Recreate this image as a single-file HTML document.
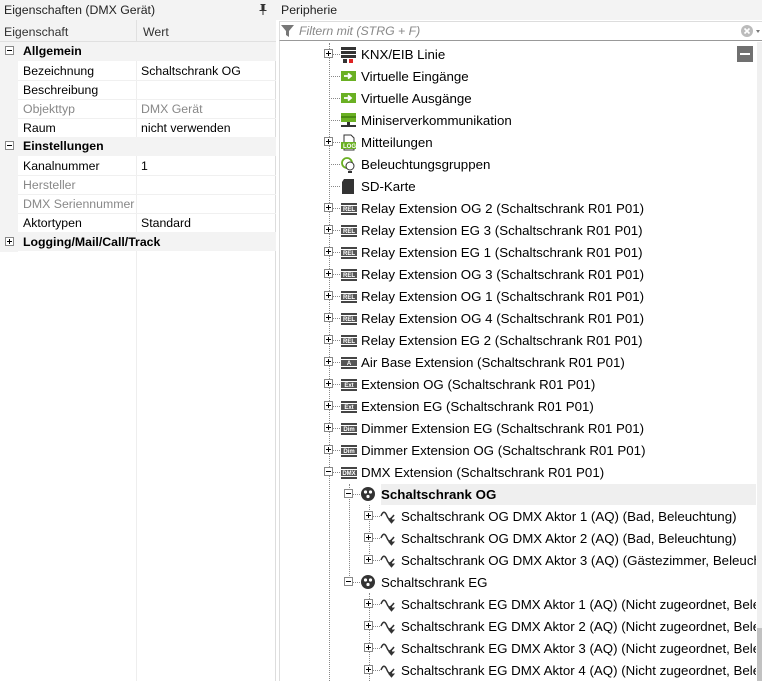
<!DOCTYPE html>
<html><head><meta charset="utf-8"><style>
*{margin:0;padding:0;box-sizing:border-box}
body{width:762px;height:681px;overflow:hidden;background:#fff;font-family:"Liberation Sans",sans-serif;position:relative;color:#000}
.a{position:absolute;white-space:nowrap}
.lp{font-size:12.3px}
.t{font-size:13.3px;line-height:22px;height:22px}
.bx{position:absolute;width:9px;height:9px;border:1px solid #888;background:#fff}
.bx:before{content:"";position:absolute;left:1px;top:3px;width:5px;height:1px;background:#000}
.bx.p:after{content:"";position:absolute;left:3px;top:1px;width:1px;height:5px;background:#000}
.hd{position:absolute;border-top:1px dotted #888;height:0}
.vd{position:absolute;border-left:1px dotted #888;width:0}
.ic{position:absolute}
#clip{position:absolute;left:0;top:0;width:756px;height:681px;overflow:hidden}
</style></head><body>
<!-- left panel -->
<div class="a" style="left:0;top:0;width:276px;height:681px;background:#fff;border-right:1px solid #ddd"></div>
<div class="a" style="left:0;top:0;width:276px;height:20px;background:#f3f3f3"></div>
<div class="a lp" style="left:4px;top:3px;color:#222">Eigenschaften (DMX Gerät)</div>
<svg class="ic" style="left:259px;top:4px" width="8" height="11"><path d="M1.5 0h5v1h-1v5h2v1h-3v4h-1V7h-3V6h2V1h-1z" fill="#333"/></svg>
<div class="a" style="left:0;top:20px;width:276px;height:22px;background:#f3f3f3;border-bottom:1px solid #e0e0e0"></div>
<div class="a" style="left:136px;top:20px;width:1px;height:22px;background:#e0e0e0"></div>
<div class="a lp" style="left:4px;top:25px;color:#333">Eigenschaft</div>
<div class="a lp" style="left:143px;top:25px;color:#333">Wert</div>
<div class="a" style="left:0;top:42px;width:18px;height:210px;background:#f3f3f3"></div>
<div class="a" style="left:136px;top:42px;width:1px;height:639px;background:#eee"></div>
<div class="a" style="left:0;top:42px;width:276px;height:19px;background:#f3f3f3"></div>
<div class="a" style="left:0;top:137px;width:276px;height:19px;background:#f3f3f3"></div>
<div class="a" style="left:0;top:232px;width:276px;height:19px;background:#f3f3f3"></div>
<div class="bx" style="left:5px;top:46px"></div>
<div class="bx" style="left:5px;top:141px"></div>
<div class="bx p" style="left:5px;top:237px"></div>
<div class="a lp" style="left:23px;top:44px;font-weight:bold">Allgemein</div>
<div class="a lp" style="left:23px;top:64px">Bezeichnung</div><div class="a lp" style="left:141px;top:64px">Schaltschrank OG</div>
<div class="a lp" style="left:23px;top:83px">Beschreibung</div>
<div class="a lp" style="left:23px;top:102px;color:#888">Objekttyp</div><div class="a lp" style="left:141px;top:102px;color:#888">DMX Gerät</div>
<div class="a lp" style="left:23px;top:121px">Raum</div><div class="a lp" style="left:141px;top:121px">nicht verwenden</div>
<div class="a lp" style="left:23px;top:139px;font-weight:bold">Einstellungen</div>
<div class="a lp" style="left:23px;top:159px">Kanalnummer</div><div class="a lp" style="left:141px;top:159px">1</div>
<div class="a lp" style="left:23px;top:178px;color:#888">Hersteller</div>
<div class="a lp" style="left:23px;top:197px;color:#888">DMX Seriennummer</div>
<div class="a lp" style="left:23px;top:216px">Aktortypen</div><div class="a lp" style="left:141px;top:216px">Standard</div>
<div class="a lp" style="left:23px;top:235px;font-weight:bold">Logging/Mail/Call/Track</div>
<div class="a" style="left:18px;top:80px;width:258px;height:1px;background:#f0f0f0"></div>
<div class="a" style="left:18px;top:99px;width:258px;height:1px;background:#f0f0f0"></div>
<div class="a" style="left:18px;top:118px;width:258px;height:1px;background:#f0f0f0"></div>
<div class="a" style="left:18px;top:175px;width:258px;height:1px;background:#f0f0f0"></div>
<div class="a" style="left:18px;top:194px;width:258px;height:1px;background:#f0f0f0"></div>
<div class="a" style="left:18px;top:213px;width:258px;height:1px;background:#f0f0f0"></div>
<!-- right panel -->
<div class="a" style="left:276px;top:0;width:486px;height:20px;background:#f3f3f3"></div>
<div class="a lp" style="left:281px;top:3px;color:#222">Peripherie</div>
<div class="a" style="left:279px;top:21px;width:483px;height:20px;border-top:1px solid #ddd;border-left:1px solid #ddd;border-bottom:1px solid #999"></div>
<svg class="ic" style="left:281px;top:24px" width="14" height="14"><path d="M0 1h13l-5 6v6l-3-2v-4z" fill="#777"/></svg>
<div class="a" style="left:299px;top:24px;font-size:12.3px;font-style:italic;color:#888">Filtern mit (STRG + F)</div>
<svg class="ic" style="left:740px;top:24px" width="22" height="14"><circle cx="7" cy="7" r="6" fill="#bbb"/><path d="M4.5 4.5l5 5M9.5 4.5l-5 5" stroke="#fff" stroke-width="1.6"/><path d="M16 6h4l-2 3z" fill="#777"/></svg>
<div class="a" style="left:279px;top:41px;width:1px;height:640px;background:#ddd"></div>
<div id="clip">
<div class="a" style="left:737px;top:46px;width:16px;height:16px;background:#707070"></div>
<div class="a" style="left:740px;top:53px;width:10px;height:2px;background:#fff"></div>
<div class="a" style="left:381px;top:484px;width:375px;height:21px;background:#efefef"></div>
<div class="vd" style="left:329px;top:43px;height:638px"></div>
<div class="vd" style="left:349px;top:484px;height:98px"></div>
<div class="vd" style="left:369px;top:505px;height:55px"></div>
<div class="vd" style="left:369px;top:593px;height:88px"></div>
<div id="tree"></div>
</div>
<script>
var rows=[
["p","knx","KNX/EIB Linie"],["","vin","Virtuelle Eingänge"],["","vin","Virtuelle Ausgänge"],["","ms","Miniserverkommunikation"],["p","log","Mitteilungen"],["","bel","Beleuchtungsgruppen"],["","sd","SD-Karte"],
["p","REL","Relay Extension OG 2 (Schaltschrank R01 P01)"],["p","REL","Relay Extension EG 3 (Schaltschrank R01 P01)"],["p","REL","Relay Extension EG 1 (Schaltschrank R01 P01)"],["p","REL","Relay Extension OG 3 (Schaltschrank R01 P01)"],["p","REL","Relay Extension OG 1 (Schaltschrank R01 P01)"],["p","REL","Relay Extension OG 4 (Schaltschrank R01 P01)"],["p","REL","Relay Extension EG 2 (Schaltschrank R01 P01)"],
["p","A","Air Base Extension (Schaltschrank R01 P01)"],["p","Ext","Extension OG (Schaltschrank R01 P01)"],["p","Ext","Extension EG (Schaltschrank R01 P01)"],["p","Dim","Dimmer Extension EG (Schaltschrank R01 P01)"],["p","Dim","Dimmer Extension OG (Schaltschrank R01 P01)"],["m","DMX","DMX Extension (Schaltschrank R01 P01)"],
["m2","dmx","Schaltschrank OG",1],["p3","aq","Schaltschrank OG DMX Aktor 1 (AQ) (Bad, Beleuchtung)"],["p3","aq","Schaltschrank OG DMX Aktor 2 (AQ) (Bad, Beleuchtung)"],["p3","aq","Schaltschrank OG DMX Aktor 3 (AQ) (Gästezimmer, Beleuchtung)"],
["m2","dmx","Schaltschrank EG"],["p3","aq","Schaltschrank EG DMX Aktor 1 (AQ) (Nicht zugeordnet, Beleuchtung)"],["p3","aq","Schaltschrank EG DMX Aktor 2 (AQ) (Nicht zugeordnet, Beleuchtung)"],["p3","aq","Schaltschrank EG DMX Aktor 3 (AQ) (Nicht zugeordnet, Beleuchtung)"],["p3","aq","Schaltschrank EG DMX Aktor 4 (AQ) (Nicht zugeordnet, Beleuchtung)"]];
function icon(k){
if(k=="knx")return '<rect x="1" y="1" width="15" height="3" fill="#333"/><rect x="1" y="5" width="15" height="3" fill="#333"/><rect x="1" y="9" width="15" height="3" fill="#333"/><rect x="3" y="13" width="4" height="4" fill="#333"/><rect x="9" y="13" width="4" height="4" fill="#d22"/>';
if(k=="vin")return '<rect x="1" y="3" width="15" height="10" fill="#6ab023"/><path d="M4 8h6M8 5.5l3 2.5-3 2.5" stroke="#fff" stroke-width="1.8" fill="none"/>';
if(k=="ms")return '<rect x="1" y="1" width="15" height="9" fill="#6ab023"/><rect x="1" y="4" width="15" height="2" fill="#4a8a13"/><rect x="7" y="10" width="3" height="3" fill="#333"/><rect x="1" y="13" width="15" height="2" fill="#333"/>';
if(k=="log")return '<path d="M4 1h7l3 3v12H4z" fill="#fff" stroke="#333"/><rect x="1" y="8" width="15" height="7" fill="#6ab023"/><text x="3" y="14" font-size="6" fill="#fff" font-family="Liberation Sans" font-weight="bold">LOG</text>';
if(k=="bel")return '<circle cx="7" cy="7" r="5" fill="none" stroke="#6ab023" stroke-width="1.8"/><circle cx="10" cy="10" r="4" fill="#fff" stroke="#333"/><rect x="8" y="15" width="4" height="2" fill="#333"/>';
if(k=="sd")return '<path d="M4 1h10v15H2V4z" fill="#333"/>';
if(k=="dmx")return '<circle cx="8" cy="8" r="7" fill="#333"/><circle cx="5.5" cy="6" r="1.6" fill="#fff"/><circle cx="10.5" cy="6" r="1.6" fill="#fff"/><circle cx="8" cy="10.5" r="1.6" fill="#fff"/>';
if(k=="aq")return '<path d="M1 8c2-5 4-5 6 0s4 3 7-1" fill="none" stroke="#333" stroke-width="1.5"/><path d="M9 12h5l-2.5 3z M11.5 9v4" stroke="#333" fill="#333"/>';
return '<rect x="1" y="3" width="16" height="2" fill="#444"/><rect x="1" y="6" width="16" height="6" fill="#555"/><rect x="1" y="13" width="16" height="2" fill="#444"/><text x="9" y="11" font-size="6" text-anchor="middle" fill="#fff" font-family="Liberation Sans" font-weight="bold">'+k+'</text>';
}
var h='';
rows.forEach(function(r,i){var cy=54+22*i,t=r[0];var lv=t.indexOf("3")>=0?3:t.indexOf("2")>=0?2:1;
var bx=lv==1?324:lv==2?344:364, ix=lv==1?340:lv==2?360:380, tx=lv==1?361:lv==2?381:401;
if(t[0]=="p"||t[0]=="m")h+='<div class="bx'+(t[0]=="p"?' p':'')+'" style="left:'+bx+'px;top:'+(cy-5)+'px"></div><div class="hd" style="left:'+(bx+9)+'px;top:'+cy+'px;width:'+(ix-bx-9)+'px"></div>';
else h+='<div class="hd" style="left:'+(bx+5)+'px;top:'+cy+'px;width:'+(ix-bx-5)+'px"></div>';
h+='<svg class="ic" style="left:'+ix+'px;top:'+(cy-8)+'px" width="18" height="18">'+icon(r[1])+'</svg>';
h+='<div class="a t" style="left:'+tx+'px;top:'+(cy-10)+'px;'+(r[3]?'font-weight:bold':'')+'">'+r[2]+'</div>';});
document.getElementById('tree').innerHTML=h;
</script>
<div class="a" style="left:757px;top:42px;width:5px;height:586px;background:#f0f0f0"></div>
<div class="a" style="left:757px;top:628px;width:5px;height:53px;background:#c2c2c2"></div>
</body></html>
